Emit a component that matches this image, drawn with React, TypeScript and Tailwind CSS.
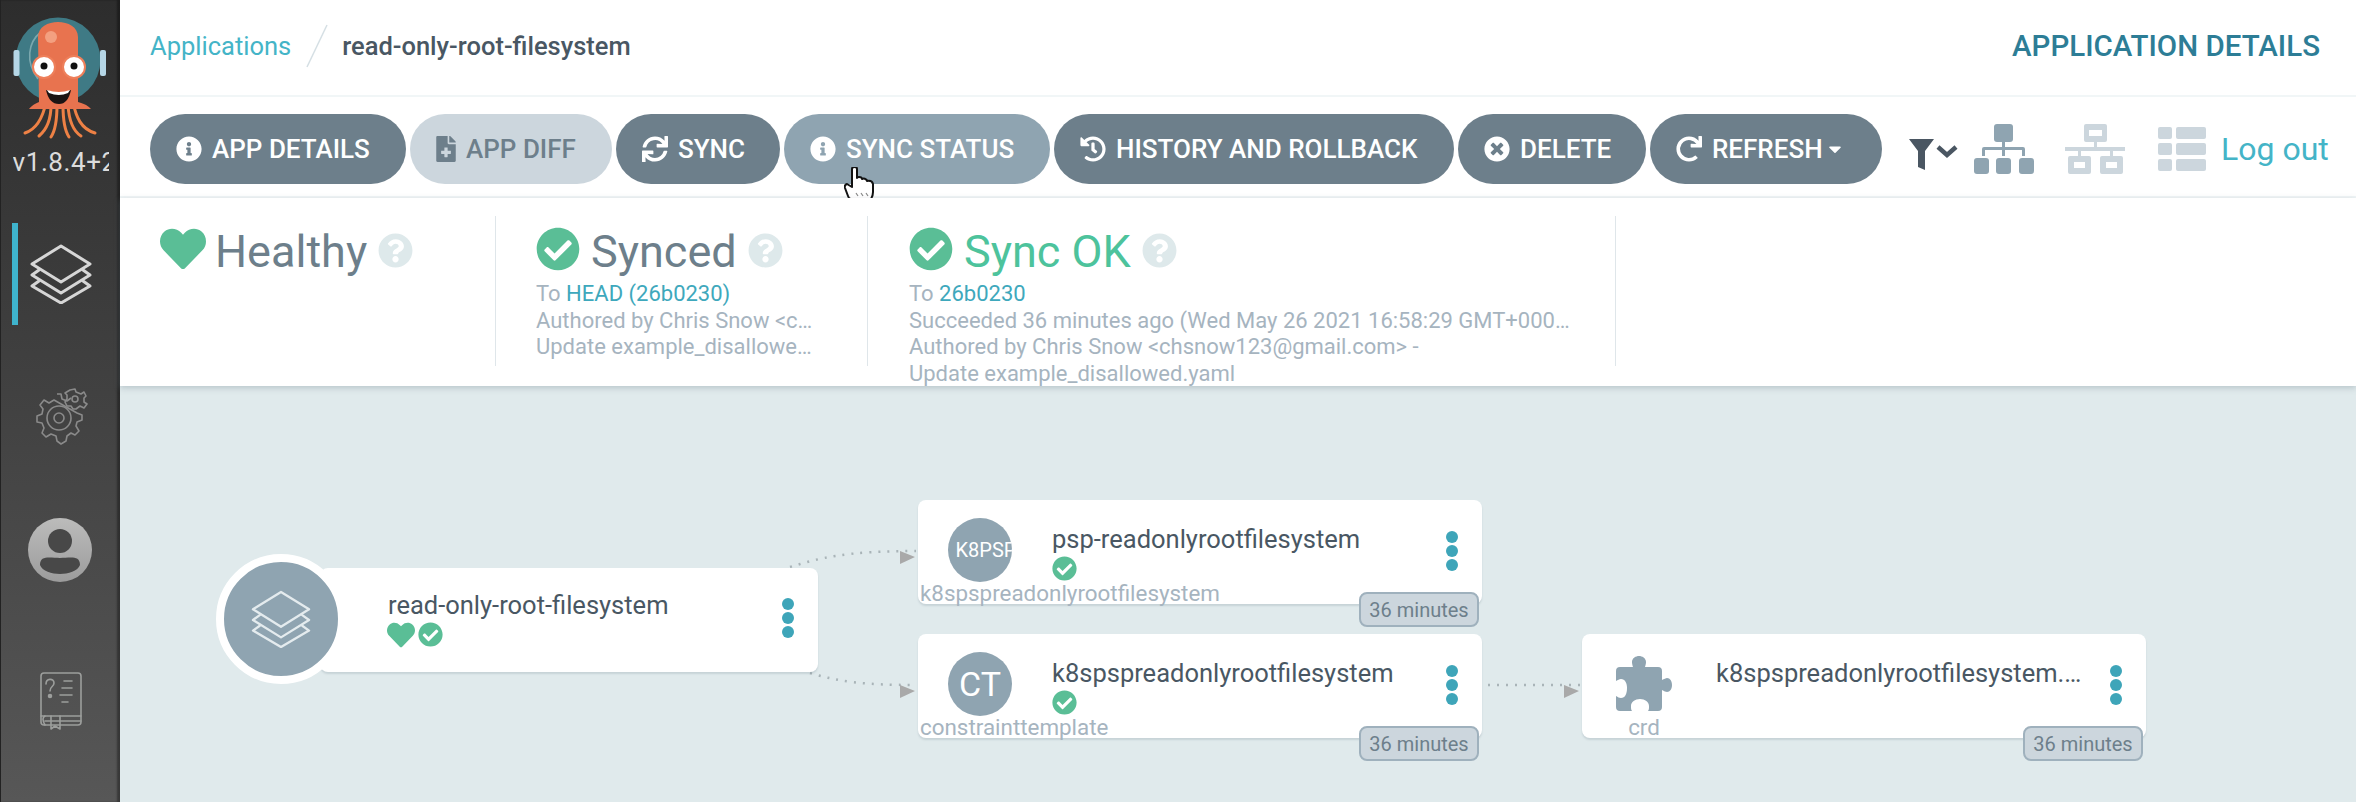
import React from 'react';
import { FaInfoCircle, FaFileMedical, FaSync, FaHistory, FaTimesCircle, FaRedo, FaCaretDown, FaHeart, FaCheckCircle, FaQuestionCircle } from 'react-icons/fa';

const Layers = ({ className, sw = 3 }: { className?: string; sw?: number }) => (
  <svg viewBox="0 0 62 60" className={className} fill="none" stroke="currentColor" strokeWidth={sw} strokeLinejoin="round" strokeLinecap="round">
    <path d="M31 2 L60 20 L31 38 L2 20 Z" />
    <path d="M9 26 L2 31 L31 49 L60 31 L53 26" />
    <path d="M9 37 L2 42 L31 59 L60 42 L53 37" />
  </svg>
);

const Logo = () => (
  <svg viewBox="0 0 96 122" className="w-[96px] h-[122px]">
    <circle cx="45" cy="43" r="42.5" fill="#3f7a85" />
    <rect x="0.5" y="33" width="6" height="26" rx="2" fill="#b5d6e6" />
    <rect x="87" y="33" width="6" height="26" rx="2" fill="#b5d6e6" />
    <path d="M25 62 C12 45 15 25 28 15" fill="none" stroke="#7ba8ae" strokeWidth="1.6" />
    <g stroke="#ee8145" strokeWidth="3" fill="none" strokeLinecap="round">
      <path d="M33 85 C30 100 24 112 12 116" />
      <path d="M38 88 C38 104 32 114 26 119" />
      <path d="M44 88 C44 104 42 114 38 120" />
      <path d="M50 88 C50 104 52 114 56 120" />
      <path d="M55 88 C56 104 60 114 68 119" />
      <path d="M60 85 C63 100 68 112 82 116" />
    </g>
    <path d="M25 20 C25 0 65 0 65 20 L65 85 C74 87 78 92 78 92 L16 92 C16 92 20 87 26 85 Z" fill="#e8734f" />
    <circle cx="38" cy="20" r="6" fill="#f3a080" />
    <circle cx="31" cy="50" r="11" fill="#fff" stroke="#ee7f5a" strokeWidth="2" />
    <circle cx="61" cy="50" r="11" fill="#fff" stroke="#ee7f5a" strokeWidth="2" />
    <circle cx="31" cy="49" r="3.5" fill="#111" />
    <circle cx="61" cy="49" r="3.5" fill="#111" />
    <path d="M33 73 Q46 78 58 73 Q55 87 46 87 Q36 87 33 73 Z" fill="#1a1414" />
    <path d="M34 73 Q46 77 57 73 L55 76 Q46 80 36 76 Z" fill="#fff" />
  </svg>
);

const Gear = () => (
  <svg viewBox="0 0 60 62" className="w-[60px] h-[62px]" fill="none" stroke="#8a8a8a" strokeWidth="1.6" strokeLinejoin="round">
    <path d="M29 8 L33 8 L34 13 L39 15 L43 12 M49 27 L54 29 L54 34 L49 36 L48 40 L51 45 L47 49 L43 47 L39 50 L38 55 L33 58 L29 55 L28 50 L23 48 L18 51 L14 47 L16 42 L14 37 L9 36 L9 30 L14 28 L15 23 L12 19 L16 14 L21 17 L26 14 Z" />
    <circle cx="31" cy="32" r="12" />
    <circle cx="31" cy="32" r="5" />
    <path d="M42 4 L47 3 L48 6 L53 8 L56 6 L58 10 L56 12 L56 16 L59 18 L56 22 L52 20 L48 23 L45 23 L43 20 L39 20 L37 16 L39 13 L39 9 L37 7 Z" />
    <circle cx="47" cy="13" r="3" />
  </svg>
);

const Book = () => (
  <svg viewBox="0 0 42 58" className="w-[42px] h-[58px]" fill="none" stroke="#9c9e9c" strokeWidth="1.6" strokeLinecap="round" strokeLinejoin="round">
    <path d="M4 1 H38 Q41 1 41 4 V50 Q41 53 38 53 H4 Q1 53 1 50 V4 Q1 1 4 1 Z" />
    <path d="M1 44 H41" />
    <path d="M5 49 H41 M5 44 Q1 46 5 53" />
    <path d="M11 44 V57 L15 54 L20 57 V44" />
    <path d="M24 9 H32 M22 16 H32 M20 23 H32 M22 30 H28" />
    <path d="M6 12 C6 6 14 6 14 11 C14 15 10 14 10 19" />
    <circle cx="10" cy="24" r="1.5" fill="#9c9e9c" />
  </svg>
);

const Avatar = () => (
  <svg viewBox="0 0 64 66" className="w-[64px] h-[66px]">
    <defs>
      <linearGradient id="av" x1="0" y1="0" x2="0" y2="1">
        <stop offset="0" stopColor="#bcbcbb" />
        <stop offset="1" stopColor="#9c9c9c" />
      </linearGradient>
    </defs>
    <circle cx="32" cy="33" r="32" fill="url(#av)" />
    <circle cx="32" cy="24" r="12" fill="#484848" />
    <path d="M12 48 C12 38 22 41 32 41 C42 41 52 38 52 48 C50 54 40 57 32 57 C24 57 14 54 12 48 Z" fill="#484848" />
  </svg>
);

const Filter = () => (
  <svg viewBox="0 0 50 42" className="w-[50px] h-[42px]">
    <path d="M1 11 H26 L17 23 V42 L10 39 V23 Z" fill="#4a5662" />
    <path d="M30 19 L39 27 L48 19" fill="none" stroke="#4a5662" strokeWidth="4.5" />
  </svg>
);

const Tree = () => (
  <svg viewBox="0 0 60 50" className="w-[60px] h-[50px]" fill="#8fa4b1">
    <rect x="20" y="0" width="19" height="18" rx="3" />
    <rect x="28" y="18" width="3" height="14" />
    <path d="M8 32 V25 Q8 23 10 23 H49 Q51 23 51 25 V32 H48 V26 H11 V32 Z" />
    <rect x="0" y="34" width="15" height="16" rx="3" />
    <rect x="22" y="34" width="15" height="16" rx="3" />
    <rect x="45" y="34" width="15" height="16" rx="3" />
  </svg>
);

const Network = () => (
  <svg viewBox="0 0 60 50" className="w-[60px] h-[50px]" fill="#ccd6dd">
    <path fillRule="evenodd" d="M21 0 H40 Q42 0 42 2 V16 Q42 18 40 18 H21 Q19 18 19 16 V2 Q19 0 21 0 Z M24 6 V12 H37 V6 Z" />
    <rect x="29" y="18" width="3" height="7" />
    <rect x="0" y="23" width="60" height="4" />
    <rect x="13" y="27" width="3" height="6" />
    <rect x="45" y="27" width="3" height="6" />
    <path fillRule="evenodd" d="M5 32 H24 Q26 32 26 34 V48 Q26 50 24 50 H5 Q3 50 3 48 V34 Q3 32 5 32 Z M9 38 V44 H20 V38 Z" />
    <path fillRule="evenodd" d="M37 32 H56 Q58 32 58 34 V48 Q58 50 56 50 H37 Q35 50 35 48 V34 Q35 32 37 32 Z M41 38 V44 H52 V38 Z" />
  </svg>
);

const ListIcon = () => (
  <div className="w-[48px] h-[45px] grid grid-cols-[14px_30px] grid-rows-3 gap-x-[4px] gap-y-[4px]">
    {[0, 1, 2, 3, 4, 5].map((i) => (
      <div key={i} className="bg-[#ccd6dd] rounded-[2px]" />
    ))}
  </div>
);

const Puzzle = () => (
  <svg viewBox="0 0 56 56" className="w-[56px] h-[56px]" fill="#8fa4b1">
    <path d="M4 11 H17 C17 11 16 8 16 6 C16 2 20 0 23 0 C26 0 30 2 30 6 C30 8 29 11 29 11 H42 Q46 11 46 15 V24 C48 23 50 22 51 22 C54 22 56 25 56 29 C56 33 54 36 51 36 C50 36 48 35 46 34 V51 Q46 55 42 55 H32 C33 54 33 52 33 50 C33 46 29 43 24 43 C19 43 15 46 15 50 C15 52 15 54 16 55 H4 Q0 55 0 51 V40 C2 41 3 42 5 42 C9 42 11 38 11 32 C11 27 9 23 5 23 C3 23 2 24 0 25 V15 Q0 11 4 11 Z" />
  </svg>
);

const Hand = () => (
  <svg viewBox="0 0 30 33" className="absolute left-[844px] top-[167px] w-[30px] h-[33px]">
    <path d="M8 2 Q8 0 10.5 0 Q13 0 13 2 V11 Q13 10 15 10 Q18 10 18 12 Q20 11 22 12.5 Q23 13 23 14 Q28 13 29 17 V25 Q29 29 27 32 H7 Q5 32 4 29 L1 21 Q0 18 3 17 L8 20 Z" fill="#fff" stroke="#111" strokeWidth="2" strokeLinejoin="round" />
    <path d="M12 26 L14 29 M17 26 L19 29 M22 26 L24 29" stroke="#888" strokeWidth="1.2" />
  </svg>
);

const ActionButton = ({ w, icon, label, tone = 'bg-[#6d7f8b] text-white', extra }: { w: string; icon: React.ReactNode; label: string; tone?: string; extra?: React.ReactNode }) => (
  <div className={`${w} ${tone} h-[70px] rounded-[35px] pl-[26px] gap-[10px] flex items-center text-[26px] font-medium whitespace-nowrap`}>
    {icon}
    <span>{label}</span>
    {extra}
  </div>
);

const Dots = ({ className }: { className?: string }) => (
  <div className={`absolute flex flex-col gap-[2px] ${className}`}>
    <div className="w-[12px] h-[12px] rounded-full bg-[#3ea5b9]" />
    <div className="w-[12px] h-[12px] rounded-full bg-[#3ea5b9]" />
    <div className="w-[12px] h-[12px] rounded-full bg-[#3ea5b9]" />
  </div>
);

const Badge = () => (
  <div className="absolute right-[3px] top-[92px] w-[120px] h-[35px] flex items-center justify-center rounded-[8px] border-2 border-[#9fb1bd] bg-[#ccd6dd] text-[#6d7f8b] text-[20px]">
    36 minutes
  </div>
);

const Node = ({ top, left, icon, name, kind, check = true, kindLeft = 'left-[2px] w-[320px] text-left' }: { top: string; left: string; icon: React.ReactNode; name: string; kind: string; check?: boolean; kindLeft?: string }) => (
  <div className={`absolute ${top} ${left} w-[564px] h-[104px] bg-white rounded-[8px] shadow-[0_2px_2px_rgba(100,120,135,0.2)]`}>
    <div className="absolute left-[30px] top-[18px] w-[64px] h-[64px]">{icon}</div>
    <div className="absolute left-[134px] top-[23px] w-[366px] text-[25.5px] leading-[32px] text-[#495763] truncate">{name}</div>
    {check && <FaCheckCircle className="absolute left-[134px] top-[56px] text-[#5abe96] w-[25px] h-[25px]" />}
    <div className={`absolute top-[80px] ${kindLeft} text-[22.4px] leading-[26px] text-[#a6b4bf] whitespace-nowrap`}>{kind}</div>
    <Dots className="left-[528px] top-[31px]" />
    <Badge />
  </div>
);

const Circle = ({ children }: { children: React.ReactNode }) => (
  <div className="w-full h-full rounded-full overflow-hidden bg-[#8fa4b1] text-white flex items-center justify-center">{children}</div>
);

const Help = () => <FaQuestionCircle className="w-[35px] h-[35px] text-[#dee9eb] mt-[2px]" />;

export default function App() {
  return (
    <div className="relative flex w-[2356px] h-[802px] overflow-hidden bg-[#e0eaec] font-['Roboto',sans-serif]">
      <aside className="w-[120px] shrink-0 h-full bg-gradient-to-b from-[#2d2d2d] to-[#575757] border-l border-[#222] shadow-[inset_-3px_0_2px_rgba(0,0,0,0.35)] flex flex-col items-center">
        <div className="mt-[17px] pl-[1px]"><Logo /></div>
        <div className="mt-[8px] w-[96px] overflow-hidden whitespace-nowrap text-[26px] leading-[30px] text-[#dcdcdc] tracking-[0.6px]">v1.8.4+2a5bc</div>
        <div className="relative mt-[46px] w-full h-[102px] flex items-center justify-center">
          <div className="absolute left-[11px] top-0 w-[6px] h-full bg-[#3fb4cd]" />
          <Layers className="w-[62px] h-[60px] text-[#d6d6d6]" />
        </div>
        <div className="mt-[61px] -ml-[5px]"><Gear /></div>
        <div className="mt-[69px] -ml-[2px]"><Avatar /></div>
        <div className="mt-[89px]"><Book /></div>
      </aside>

      <main className="flex-1 flex flex-col min-w-0">
        <header className="h-[97px] bg-white border-b-2 border-[#f1f6f7] flex items-center pl-[30px] pr-[36px] pb-[3px] shrink-0">
          <span className="text-[25.5px] text-[#44b4c7]">Applications</span>
          <svg viewBox="0 0 22 44" className="ml-[15px] w-[22px] h-[44px]"><path d="M21 1 L1 43" stroke="#d5dfe4" strokeWidth="1.5" /></svg>
          <span className="ml-[14px] text-[25.5px] font-medium text-[#495763]">read-only-root-filesystem</span>
          <span className="ml-auto text-[29.5px] font-medium text-[#2d7d96]">APPLICATION DETAILS</span>
        </header>

        <div className="h-[101px] bg-white border-b-2 border-[#f1f6f7] flex items-center pl-[30px] pt-[5px] gap-[4px] shrink-0">
          <ActionButton w="w-[256px]" icon={<FaInfoCircle className="w-[26px] h-[26px]" />} label="APP DETAILS" />
          <ActionButton w="w-[202px]" tone="bg-[#ccd6dd] text-[#6d7f8b]" icon={<FaFileMedical className="w-[20px] h-[26px]" />} label="APP DIFF" />
          <ActionButton w="w-[164px]" icon={<FaSync className="w-[26px] h-[26px]" />} label="SYNC" />
          <ActionButton w="w-[266px]" tone="bg-[#8fa4b1] text-white" icon={<FaInfoCircle className="w-[26px] h-[26px]" />} label="SYNC STATUS" />
          <ActionButton w="w-[400px]" icon={<FaHistory className="w-[26px] h-[26px]" />} label="HISTORY AND ROLLBACK" />
          <ActionButton w="w-[188px]" icon={<FaTimesCircle className="w-[26px] h-[26px]" />} label="DELETE" />
          <ActionButton w="w-[232px]" icon={<FaRedo className="w-[26px] h-[26px]" />} label="REFRESH" extra={<FaCaretDown className="w-[16px] h-[20px] -ml-[6px]" />} />
          <div className="ml-[22px] flex items-center"><Filter /></div>
          <div className="ml-[12px]"><Tree /></div>
          <div className="ml-[27px]"><Network /></div>
          <div className="ml-[29px]"><ListIcon /></div>
          <span className="ml-[11px] text-[32px] text-[#44b4c7] whitespace-nowrap">Log out</span>
        </div>

        <section className="h-[188px] bg-white flex pt-[18px] shadow-[0_2px_6px_rgba(110,130,140,0.35)] shrink-0 z-10">
          <div className="w-[376px] h-[150px] border-r border-[#dfe6ea] pl-[40px]">
            <div className="flex items-center h-[48px] mt-[9px]">
              <FaHeart className="w-[46px] h-[46px] text-[#5abe96]" />
              <span className="ml-[9px] mt-[5px] text-[45px] text-[#6d7f8b]">Healthy</span>
              <span className="ml-[11px]"><Help /></span>
            </div>
          </div>
          <div className="w-[372px] h-[150px] border-r border-[#dfe6ea] pl-[40px]">
            <div className="flex items-center h-[48px] mt-[9px]">
              <FaCheckCircle className="w-[44px] h-[44px] text-[#5abe96]" />
              <span className="ml-[11px] mt-[5px] text-[45px] text-[#6d7f8b]">Synced</span>
              <span className="ml-[11px]"><Help /></span>
            </div>
            <div className="text-[22px] leading-[26.6px] mt-[8px] w-[282px] text-[#a6b4bf]">
              <div>To <span className="text-[#3ea8bc]">HEAD (26b0230)</span></div>
              <div className="truncate">Authored by Chris Snow &lt;chsnow123@gmail.com&gt;</div>
              <div className="truncate">Update example_disallowed.yaml</div>
            </div>
          </div>
          <div className="w-[748px] h-[150px] border-r border-[#dfe6ea] pl-[41px]">
            <div className="flex items-center h-[48px] mt-[9px]">
              <FaCheckCircle className="w-[44px] h-[44px] text-[#5abe96]" />
              <span className="ml-[11px] mt-[5px] text-[45px] text-[#4dc39c]">Sync OK</span>
              <span className="ml-[11px]"><Help /></span>
            </div>
            <div className="text-[22px] leading-[26.6px] mt-[8px] w-[662px] text-[#a6b4bf]">
              <div>To <span className="text-[#3ea8bc]">26b0230</span></div>
              <div className="truncate">Succeeded 36 minutes ago (Wed May 26 2021 16:58:29 GMT+0000 (Coordinated Universal Time))</div>
              <div className="truncate">Authored by Chris Snow &lt;chsnow123@gmail.com&gt; -</div>
              <div className="truncate">Update example_disallowed.yaml</div>
            </div>
          </div>
        </section>

        <div className="relative flex-1">
          <svg className="absolute left-0 top-0 w-[2236px] h-[416px]" viewBox="0 0 2236 416" fill="none">
            <path d="M670 181 C700 172 725 165 796 165" stroke="#a9b4b8" strokeWidth="2.5" strokeDasharray="2 7" />
            <path d="M690 287 C720 296 745 299 796 299" stroke="#a9b4b8" strokeWidth="2.5" strokeDasharray="2 7" />
            <path d="M1368 299 H1460" stroke="#a9b4b8" strokeWidth="2.5" strokeDasharray="2 7" />
            <path d="M780 165 L795 171 L780 178 Z" fill="#a9a9a9" />
            <path d="M780 299 L795 305 L780 312 Z" fill="#a9a9a9" />
            <path d="M1444 299 L1459 305 L1444 312 Z" fill="#a9a9a9" />
          </svg>

          <div className="absolute left-[200px] top-[182px] w-[498px] h-[104px] bg-white rounded-[8px] shadow-[0_2px_2px_rgba(100,120,135,0.2)]">
            <div className="absolute left-[68px] top-[21px] text-[25.5px] leading-[32px] text-[#495763] whitespace-nowrap">read-only-root-filesystem</div>
            <FaHeart className="absolute left-[67px] top-[53px] w-[28px] h-[28px] text-[#5abe96]" />
            <FaCheckCircle className="absolute left-[98px] top-[54px] w-[25px] h-[25px] text-[#5abe96]" />
            <Dots className="left-[462px] top-[30px]" />
          </div>
          <div className="absolute left-[96px] top-[168px] w-[130px] h-[130px] rounded-full bg-[#8fa4b1] border-[8px] border-white flex items-center justify-center">
            <Layers className="w-[60px] h-[58px] text-[#e4ebee]" sw={2.4} />
          </div>

          <Node top="top-[114px]" left="left-[798px]" name="psp-readonlyrootfilesystem" kind="k8spspreadonlyrootfilesystem" icon={<Circle><span className="text-[20px] whitespace-nowrap pl-[12px]">K8PSP</span></Circle>} />
          <Node top="top-[248px]" left="left-[798px]" name="k8spspreadonlyrootfilesystem" kind="constrainttemplate" icon={<Circle><span className="text-[34px]">CT</span></Circle>} />
          <Node top="top-[248px]" left="left-[1462px]" check={false} name="k8spspreadonlyrootfilesystem.constraints.gatekeeper.sh" kind="crd" kindLeft="left-[30px] w-[64px] text-center" icon={<div className="pl-[4px] pt-[4px]"><Puzzle /></div>} />
        </div>
      </main>
      <Hand />
    </div>
  );
}
